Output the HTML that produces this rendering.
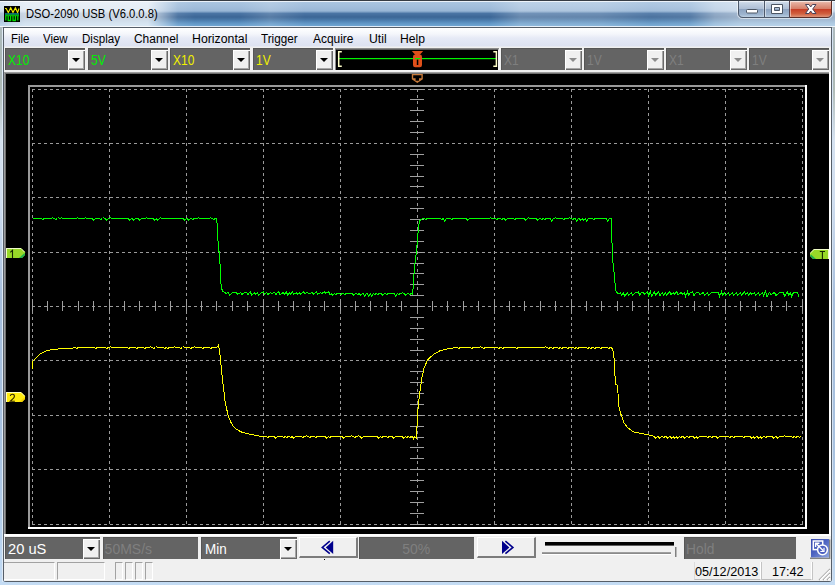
<!DOCTYPE html>
<html><head><meta charset="utf-8"><title>DSO-2090 USB</title>
<style>
html,body{margin:0;padding:0;}
body{width:835px;height:585px;overflow:hidden;position:relative;background:#bcd2ea;font-family:"Liberation Sans",sans-serif;}
.abs{position:absolute;}
#frame{left:0;top:0;width:835px;height:585px;background:linear-gradient(180deg,#b4c0c8 0px,#a9b6b4 60px,#b0bcb8 90px,#d6e2f0 140px,#d0def0 200px,#a6bedc 300px,#a8c2e0 450px,#b8d2ee 540px,#c4dcf4 585px);}
#frameL{left:2px;top:28px;width:1px;height:554px;background:#dfeaf6;}
#frameR{left:832px;top:28px;width:1px;height:554px;background:#d4e2f2;}
#cborder{left:3px;top:27px;width:829px;height:555px;background:#565e68;border-radius:0 0 3px 3px;}
#titlebar{left:0;top:1px;width:835px;height:26px;
 background:
  linear-gradient(90deg,rgba(255,255,255,.55) 0px,rgba(255,255,255,.72) 25px,rgba(255,255,255,.74) 148px,rgba(255,255,255,.4) 164px,rgba(255,255,255,.08) 178px,rgba(255,255,255,0) 195px,rgba(255,255,255,0) 240px,rgba(255,255,255,.14) 270px,rgba(255,255,255,0) 305px,rgba(255,255,255,0) 490px,rgba(255,255,255,.22) 520px,rgba(255,255,255,.2) 600px,rgba(255,255,255,.08) 650px,rgba(255,255,255,.12) 690px,rgba(255,255,255,.4) 715px,rgba(255,255,255,.5) 740px,rgba(255,255,255,.5) 835px),
  linear-gradient(180deg,#eaf1f9 0px,#eaf1f9 1px,#a9c4e0 1.500px,#a2bedc 6px,#98b6d6 10px,#4a74a4 12.500px,#3c6696 16px,#4a7aaa 19px,#5e94c4 22px,#70a6d2 25px,#e0ecf8 25px,#e0ecf8 26px);}
#toprow{left:0;top:0;width:835px;height:1px;background:#363c44;}
#title{left:26px;top:6px;font-size:12px;line-height:16px;color:#000;white-space:nowrap;transform-origin:0 0;transform:scaleX(.936);}
#client{left:4px;top:28px;width:827px;height:553px;background:#f0f0f0;}
#menubar{left:4px;top:28px;width:827px;height:19px;background:linear-gradient(180deg,#ffffff 0px,#f4f6fb 6px,#e6eaf6 10px,#dde2f1 18px,#f0f0f0 19px);}
.mi{position:absolute;top:32px;font-size:12px;line-height:14px;color:#000;white-space:nowrap;transform-origin:0 0;transform:scaleX(.95);}
.combo{position:absolute;height:21.500px;background:#646464;box-sizing:border-box;box-shadow:inset 1px 1px 0 #565656;}
.combo .t{position:absolute;left:3px;top:4px;font-size:14px;line-height:16px;white-space:nowrap;transform-origin:0 0;transform:scaleX(.855);}
.btn{position:absolute;right:0;top:2px;bottom:0;width:17px;background:#f0f0f0;box-sizing:border-box;border-top:1px solid #fff;border-left:1px solid #fff;box-shadow:inset -1px -1px 0 #6a6a6a, inset -2px -2px 0 #a6a6a6;}
.btn:after{content:"";position:absolute;left:3px;top:7px;border-left:4px solid transparent;border-right:4px solid transparent;border-top:4px solid #000;}
.dis .btn:after{border-top-color:#8c8c8c;}
.dis .t{color:#7f7f7f;}
.edit{height:22px !important;}
.edit .t{top:3.500px;}
.pbtn{position:absolute;height:21px;background:#f0f0f0;box-sizing:border-box;border-top:1px solid #fff;border-left:1px solid #fff;border-right:2px solid #7c7c7c;border-bottom:2px solid #7c7c7c;}
.sp{position:absolute;box-sizing:border-box;border-top:1px solid #a2a2a2;border-left:1px solid #a2a2a2;border-right:1px solid #fff;border-bottom:1px solid #fff;height:18px;top:562px;}
.st{position:absolute;font-size:12.500px;line-height:14px;color:#000;white-space:nowrap;top:565px;transform-origin:0 0;transform:scaleX(1.012);}
svg.scope{position:absolute;left:4px;top:72px;}
</style></head>
<body>
<div id="frame" class="abs"></div>
<div id="frameL" class="abs"></div><div id="frameR" class="abs"></div>
<div id="cborder" class="abs"></div>
<div id="toprow" class="abs"></div>
<div id="titlebar" class="abs"></div>
<svg class="abs" style="left:734px;top:0" width="101" height="22" viewBox="734 0 101 22">
<defs>
<linearGradient id="gb" x1="0" y1="0" x2="0" y2="1"><stop offset="0" stop-color="#dfe7f1"/><stop offset=".12" stop-color="#c8d5e5"/><stop offset=".47" stop-color="#aebfd5"/><stop offset=".52" stop-color="#8da3c0"/><stop offset=".85" stop-color="#9fb6d0"/><stop offset="1" stop-color="#bdd0e2"/></linearGradient>
<linearGradient id="gr" x1="0" y1="0" x2="0" y2="1"><stop offset="0" stop-color="#f0cfc4"/><stop offset=".12" stop-color="#e4ac9c"/><stop offset=".47" stop-color="#d6806a"/><stop offset=".52" stop-color="#c63e26"/><stop offset=".8" stop-color="#d0603f"/><stop offset="1" stop-color="#de957a"/></linearGradient>
<clipPath id="cpb"><path d="M739 1 H831 V13 Q831 17 827 17 H743 Q739 17 739 13 Z"/></clipPath>
</defs>
<path d="M737.500 1 V13.500 Q737.500 18.500 742.500 18.500 H827.500 Q832.500 18.500 832.500 13.500 V1" fill="none" stroke="#ffffff" stroke-opacity=".55" stroke-width="1"/>
<g clip-path="url(#cpb)">
<rect x="739" y="1" width="26" height="16" fill="url(#gb)"/>
<rect x="765" y="1" width="25" height="16" fill="url(#gb)"/>
<rect x="790" y="1" width="42" height="16" fill="url(#gr)"/>
<path d="M739.500 1.500 H764 V16.500 M765.500 16.500 V1.500 H789 M790.500 16.500 V1.500 H831" fill="none" stroke="#fff" stroke-opacity=".5" stroke-width="1"/>
</g>
<path d="M738.500 1 V13 Q738.500 17.500 743 17.500 H789.500" fill="none" stroke="#4c586a" stroke-width="1"/>
<path d="M789.500 17.500 H827 Q831.500 17.500 831.500 13 V1" fill="none" stroke="#5c2c24" stroke-width="1"/>
<path d="M764.500 1 V17.500" stroke="#4c586a" stroke-width="1" fill="none"/>
<path d="M789.500 1 V17.500" stroke="#54404a" stroke-width="1" fill="none"/>
<!-- minimize -->
<rect x="746.500" y="9.500" width="11" height="3.500" rx="1" fill="#fff" stroke="#4c5664" stroke-width="1"/>
<!-- maximize -->
<path d="M771.500 4.500 H782.500 V13.500 H771.500 Z M774.500 7.500 V10.500 H779.500 V7.500 Z" fill="#fff" fill-rule="evenodd" stroke="#4c5664" stroke-width="1" stroke-linejoin="round"/>
<!-- close X -->
<path d="M805.500 4.500 L809 4.500 L810.700 7 L812.400 4.500 L816 4.500 L812.700 9 L816 13.500 L812.400 13.500 L810.700 11 L809 13.500 L805.500 13.500 L808.700 9 Z" fill="#fff" stroke="#4a4258" stroke-width="1" stroke-linejoin="round"/>
</svg>

<svg class="abs" style="left:4px;top:6px" width="16" height="16" viewBox="0 0 16 16">
<rect width="16" height="16" fill="#000"/>
<polyline points="1,2.500 2.200,2.500 4.300,6.600 6.700,1.800 9,6.600 11.400,1.800 13.600,6.600 15,2.500" fill="none" stroke="#f0ec00" stroke-width="1.100"/>
<rect x="1" y="7.300" width="14" height="1.400" fill="#109898"/>
<rect x="1" y="8.700" width="14" height="1.500" fill="#00b800"/>
<path d="M1.800 14.500 V10 M4.200 10 V14.500 H6.600 V10 M9 10 V14.500 H11.400 V10 M13.800 10 V14.500" fill="none" stroke="#00dc00" stroke-width="1.300"/>
</svg>

<div id="title" class="abs">DSO-2090 USB (V6.0.0.8)</div>
<div id="client" class="abs"></div>
<div id="menubar" class="abs"></div>
<span class="mi" style="left:11px;transform:scaleX(0.955)">File</span>
<span class="mi" style="left:43px;transform:scaleX(0.955)">View</span>
<span class="mi" style="left:82px;transform:scaleX(0.965)">Display</span>
<span class="mi" style="left:134px;transform:scaleX(0.995)">Channel</span>
<span class="mi" style="left:192px;transform:scaleX(1.025)">Horizontal</span>
<span class="mi" style="left:261px;transform:scaleX(0.975)">Trigger</span>
<span class="mi" style="left:313px;transform:scaleX(0.995)">Acquire</span>
<span class="mi" style="left:368.5px;transform:scaleX(1.02)">Util</span>
<span class="mi" style="left:400px;transform:scaleX(1.01)">Help</span>

<!-- top toolbar -->
<div class="combo" style="left:5px;top:48px;width:80px"><span class="t" style="color:#00f000">X10</span><div class="btn"></div></div>
<div class="combo" style="left:88px;top:48px;width:80px"><span class="t" style="color:#00f000">5V</span><div class="btn"></div></div>
<div class="combo" style="left:170px;top:48px;width:80px"><span class="t" style="color:#f0f000">X10</span><div class="btn"></div></div>
<div class="combo" style="left:252.500px;top:48px;width:80.500px"><span class="t" style="color:#f0f000">1V</span><div class="btn"></div></div>
<svg class="abs" style="left:335px;top:48px" width="165" height="23" viewBox="335 48 165 23">
<rect x="335" y="48" width="165" height="23" fill="#f4f4f4"/>
<rect x="335" y="48" width="164" height="1.500" fill="#8a8a8a"/>
<rect x="335" y="48" width="1.500" height="22" fill="#8a8a8a"/>
<rect x="336" y="49.500" width="162" height="20.500" fill="#000"/>
<rect x="338" y="58" width="159" height="1.200" fill="#00f400"/>
<path d="M341.800 51.700 H338.700 V66.300 H341.800" fill="none" stroke="#ffffc8" stroke-width="1.500"/>
<path d="M493.300 51.700 H496.400 V66.300 H493.300" fill="none" stroke="#ffffc8" stroke-width="1.500"/>
<!-- trigger pos icon -->
<path d="M411.800 51 H423.200 L419.500 55 H415.500 Z" fill="#e0501a"/>
<rect x="413" y="54.500" width="9" height="12.700" rx="2.200" fill="#e0501a"/>
<rect x="415" y="58" width="5" height="1.200" fill="#00f400"/>
<rect x="416.800" y="59.600" width="1.500" height="5.400" fill="#000"/>
</svg>

<div class="combo dis" style="left:500.500px;top:48px;width:81px"><span class="t">X1</span><div class="btn"></div></div>
<div class="combo dis" style="left:583.500px;top:48px;width:80.500px"><span class="t">1V</span><div class="btn"></div></div>
<div class="combo dis" style="left:666px;top:48px;width:81px"><span class="t">X1</span><div class="btn"></div></div>
<div class="combo dis" style="left:748.500px;top:48px;width:80.500px"><span class="t">1V</span><div class="btn"></div></div>

<svg class="scope" width="827" height="464" viewBox="4 72 827 464">
<rect x="4" y="72" width="827" height="464" fill="#fff"/>
<rect x="4" y="72" width="825" height="462" fill="#9e9e9e"/>
<rect x="5" y="73" width="824" height="461" fill="#6e6e6e"/>
<rect x="6" y="74" width="823" height="460" fill="#000"/>
<g shape-rendering="crispEdges">
<rect x="28" y="85" width="779" height="2" fill="#9a9a9a"/>
<rect x="28" y="85" width="2" height="444" fill="#9a9a9a"/>
<rect x="28" y="527" width="779" height="2" fill="#fff"/>
<rect x="805" y="85" width="2" height="444" fill="#fff"/>
<g stroke="#9a9a9a" stroke-width="1" stroke-dasharray="3 3">
<line x1="32.5" y1="89" x2="32.5" y2="525" />
<line x1="109.5" y1="89" x2="109.5" y2="525" />
<line x1="186.5" y1="89" x2="186.5" y2="525" />
<line x1="263.5" y1="89" x2="263.5" y2="525" />
<line x1="340.5" y1="89" x2="340.5" y2="525" />
<line x1="417.5" y1="89" x2="417.5" y2="525" />
<line x1="494.5" y1="89" x2="494.5" y2="525" />
<line x1="571.5" y1="89" x2="571.5" y2="525" />
<line x1="648.5" y1="89" x2="648.5" y2="525" />
<line x1="725.5" y1="89" x2="725.5" y2="525" />
<line x1="802.5" y1="89" x2="802.5" y2="525" />
<line x1="32" y1="89.5" x2="803" y2="89.5" />
<line x1="32" y1="143.5" x2="803" y2="143.5" />
<line x1="32" y1="197.5" x2="803" y2="197.5" />
<line x1="32" y1="252.5" x2="803" y2="252.5" />
<line x1="32" y1="306.5" x2="803" y2="306.5" />
<line x1="32" y1="360.5" x2="803" y2="360.5" />
<line x1="32" y1="415.5" x2="803" y2="415.5" />
<line x1="32" y1="469.5" x2="803" y2="469.5" />
<line x1="32" y1="524.5" x2="803" y2="524.5" />
</g>
<g stroke="#a0a0a0" stroke-width="1">
<line x1="32.5" y1="301" x2="32.5" y2="311" />
<line x1="47.5" y1="301" x2="47.5" y2="311" />
<line x1="62.5" y1="301" x2="62.5" y2="311" />
<line x1="78.5" y1="301" x2="78.5" y2="311" />
<line x1="93.5" y1="301" x2="93.5" y2="311" />
<line x1="109.5" y1="301" x2="109.5" y2="311" />
<line x1="124.5" y1="301" x2="124.5" y2="311" />
<line x1="139.5" y1="301" x2="139.5" y2="311" />
<line x1="155.5" y1="301" x2="155.5" y2="311" />
<line x1="170.5" y1="301" x2="170.5" y2="311" />
<line x1="186.5" y1="301" x2="186.5" y2="311" />
<line x1="201.5" y1="301" x2="201.5" y2="311" />
<line x1="216.5" y1="301" x2="216.5" y2="311" />
<line x1="232.5" y1="301" x2="232.5" y2="311" />
<line x1="247.5" y1="301" x2="247.5" y2="311" />
<line x1="263.5" y1="301" x2="263.5" y2="311" />
<line x1="278.5" y1="301" x2="278.5" y2="311" />
<line x1="293.5" y1="301" x2="293.5" y2="311" />
<line x1="309.5" y1="301" x2="309.5" y2="311" />
<line x1="324.5" y1="301" x2="324.5" y2="311" />
<line x1="340.5" y1="301" x2="340.5" y2="311" />
<line x1="355.5" y1="301" x2="355.5" y2="311" />
<line x1="370.5" y1="301" x2="370.5" y2="311" />
<line x1="386.5" y1="301" x2="386.5" y2="311" />
<line x1="401.5" y1="301" x2="401.5" y2="311" />
<line x1="417.5" y1="301" x2="417.5" y2="311" />
<line x1="432.5" y1="301" x2="432.5" y2="311" />
<line x1="447.5" y1="301" x2="447.5" y2="311" />
<line x1="463.5" y1="301" x2="463.5" y2="311" />
<line x1="478.5" y1="301" x2="478.5" y2="311" />
<line x1="494.5" y1="301" x2="494.5" y2="311" />
<line x1="509.5" y1="301" x2="509.5" y2="311" />
<line x1="524.5" y1="301" x2="524.5" y2="311" />
<line x1="540.5" y1="301" x2="540.5" y2="311" />
<line x1="555.5" y1="301" x2="555.5" y2="311" />
<line x1="571.5" y1="301" x2="571.5" y2="311" />
<line x1="586.5" y1="301" x2="586.5" y2="311" />
<line x1="601.5" y1="301" x2="601.5" y2="311" />
<line x1="617.5" y1="301" x2="617.5" y2="311" />
<line x1="632.5" y1="301" x2="632.5" y2="311" />
<line x1="648.5" y1="301" x2="648.5" y2="311" />
<line x1="663.5" y1="301" x2="663.5" y2="311" />
<line x1="678.5" y1="301" x2="678.5" y2="311" />
<line x1="694.5" y1="301" x2="694.5" y2="311" />
<line x1="709.5" y1="301" x2="709.5" y2="311" />
<line x1="725.5" y1="301" x2="725.5" y2="311" />
<line x1="740.5" y1="301" x2="740.5" y2="311" />
<line x1="755.5" y1="301" x2="755.5" y2="311" />
<line x1="771.5" y1="301" x2="771.5" y2="311" />
<line x1="786.5" y1="301" x2="786.5" y2="311" />
<line x1="802.5" y1="301" x2="802.5" y2="311" />
<line x1="410" y1="89.5" x2="424" y2="89.5" />
<line x1="410" y1="99.5" x2="424" y2="99.5" />
<line x1="410" y1="110.5" x2="424" y2="110.5" />
<line x1="410" y1="121.5" x2="424" y2="121.5" />
<line x1="410" y1="132.5" x2="424" y2="132.5" />
<line x1="410" y1="143.5" x2="424" y2="143.5" />
<line x1="410" y1="154.5" x2="424" y2="154.5" />
<line x1="410" y1="165.5" x2="424" y2="165.5" />
<line x1="410" y1="176.5" x2="424" y2="176.5" />
<line x1="410" y1="186.5" x2="424" y2="186.5" />
<line x1="410" y1="197.5" x2="424" y2="197.5" />
<line x1="410" y1="208.5" x2="424" y2="208.5" />
<line x1="410" y1="219.5" x2="424" y2="219.5" />
<line x1="410" y1="230.5" x2="424" y2="230.5" />
<line x1="410" y1="241.5" x2="424" y2="241.5" />
<line x1="410" y1="252.5" x2="424" y2="252.5" />
<line x1="410" y1="263.5" x2="424" y2="263.5" />
<line x1="410" y1="273.5" x2="424" y2="273.5" />
<line x1="410" y1="284.5" x2="424" y2="284.5" />
<line x1="410" y1="295.5" x2="424" y2="295.5" />
<line x1="410" y1="306.5" x2="424" y2="306.5" />
<line x1="410" y1="317.5" x2="424" y2="317.5" />
<line x1="410" y1="328.5" x2="424" y2="328.5" />
<line x1="410" y1="339.5" x2="424" y2="339.5" />
<line x1="410" y1="350.5" x2="424" y2="350.5" />
<line x1="410" y1="360.5" x2="424" y2="360.5" />
<line x1="410" y1="371.5" x2="424" y2="371.5" />
<line x1="410" y1="382.5" x2="424" y2="382.5" />
<line x1="410" y1="393.5" x2="424" y2="393.5" />
<line x1="410" y1="404.5" x2="424" y2="404.5" />
<line x1="410" y1="415.5" x2="424" y2="415.5" />
<line x1="410" y1="426.5" x2="424" y2="426.5" />
<line x1="410" y1="437.5" x2="424" y2="437.5" />
<line x1="410" y1="447.5" x2="424" y2="447.5" />
<line x1="410" y1="458.5" x2="424" y2="458.5" />
<line x1="410" y1="469.5" x2="424" y2="469.5" />
<line x1="410" y1="480.5" x2="424" y2="480.5" />
<line x1="410" y1="491.5" x2="424" y2="491.5" />
<line x1="410" y1="502.5" x2="424" y2="502.5" />
<line x1="410" y1="513.5" x2="424" y2="513.5" />
<line x1="410" y1="524.5" x2="424" y2="524.5" />
</g>
</g>
<polyline fill="none" stroke="#00ff00" stroke-width="1" shape-rendering="crispEdges" points="32.5,218.5 35.5,218.5 35.5,218.5 37.5,218.5 37.5,218.5 39.5,218.5 39.5,218.5 41.5,218.5 41.5,218.5 42.5,219.5 44.5,218.5 44.5,218.5 49.5,218.5 49.5,218.5 51.5,218.5 51.5,218.5 52.5,217.5 53.5,218.5 54.5,218.5 55.5,219.5 57.5,218.5 57.5,218.5 58.5,217.5 59.5,218.5 60.5,218.5 61.5,217.5 62.5,218.5 63.5,218.5 66.5,218.5 66.5,218.5 69.5,218.5 69.5,218.5 72.5,218.5 72.5,218.5 76.5,218.5 76.5,218.5 77.5,217.5 78.5,218.5 79.5,218.5 82.5,218.5 82.5,218.5 84.5,218.5 84.5,218.5 85.5,217.5 86.5,218.5 87.5,218.5 92.5,218.5 92.5,218.5 93.5,220.5 95.5,218.5 96.5,218.5 99.5,218.5 99.5,218.5 100.5,219.5 102.5,218.5 102.5,218.5 103.5,217.5 104.5,218.5 105.5,218.5 106.5,220.5 108.5,218.5 109.5,218.5 110.5,217.5 111.5,218.5 112.5,218.5 117.5,218.5 117.5,218.5 121.5,218.5 121.5,218.5 126.5,218.5 126.5,218.5 128.5,218.5 128.5,218.5 129.5,220.5 131.5,218.5 132.5,218.5 133.5,220.5 135.5,218.5 136.5,218.5 138.5,218.5 138.5,218.5 139.5,220.5 141.5,218.5 141.5,218.5 145.5,218.5 145.5,218.5 146.5,217.5 147.5,218.5 148.5,218.5 153.5,218.5 153.5,218.5 154.5,220.5 156.5,218.5 156.5,218.5 157.5,220.5 159.5,218.5 159.5,218.5 160.5,217.5 161.5,218.5 162.5,218.5 166.5,218.5 166.5,218.5 169.5,218.5 169.5,218.5 174.5,218.5 174.5,218.5 179.5,218.5 179.5,218.5 183.5,218.5 183.5,218.5 184.5,220.5 186.5,218.5 187.5,218.5 188.5,220.5 190.5,218.5 191.5,218.5 192.5,219.5 194.5,218.5 194.5,218.5 197.5,218.5 197.5,218.5 198.5,217.5 199.5,218.5 200.5,218.5 203.5,218.5 203.5,218.5 205.5,218.5 205.5,218.5 209.5,218.5 209.5,218.5 210.5,217.5 211.5,218.5 212.5,218.5 213.5,219.5 215.5,218.5 216.4,218.5 217.5,226.0 218.0,241.0 219.8,259.6 221.0,284.0 221.3,288.0 223.0,291.5 226.0,293.3 228.5,292.5 229.5,295.5 232.5,292.5 236.5,292.5 236.5,292.5 237.5,294.5 240.5,292.5 242.0,294.5 244.5,292.5 246.5,292.5 246.5,292.5 248.0,294.5 250.5,291.5 251.5,295.5 254.5,292.5 255.5,294.5 257.5,292.5 258.5,295.5 261.5,292.5 263.5,292.5 263.5,291.5 264.5,294.5 266.5,292.5 268.0,294.5 270.5,292.5 272.0,293.5 274.5,292.5 276.0,294.5 278.5,291.5 280.0,294.5 283.5,292.5 284.5,294.5 286.5,291.5 287.5,295.5 289.5,292.5 290.5,294.5 292.5,291.5 293.5,294.5 296.5,292.5 297.5,294.5 299.5,292.5 300.5,294.5 303.5,291.5 304.5,293.5 307.5,292.5 309.0,293.5 312.5,292.5 313.5,294.5 316.5,291.5 317.5,294.5 320.5,292.5 322.0,293.5 324.5,291.5 325.5,293.5 328.5,291.5 330.0,294.5 331.5,293.5 332.5,295.5 334.5,293.5 334.5,293.5 335.5,294.5 337.5,293.5 337.5,293.5 339.5,293.5 339.5,293.5 340.5,294.5 342.5,293.5 343.5,293.5 344.5,294.5 346.5,293.5 346.5,293.5 349.5,293.5 349.5,293.5 352.5,293.5 352.5,293.5 353.5,295.5 355.5,293.5 356.5,293.5 357.5,294.5 359.5,293.5 359.5,293.5 360.5,295.5 362.5,293.5 363.5,293.5 364.5,296.5 366.5,293.5 367.5,293.5 368.5,296.5 370.5,293.5 370.5,293.5 371.5,296.5 373.5,293.5 373.5,293.5 374.5,294.5 376.5,293.5 376.5,293.5 377.5,294.5 379.5,293.5 379.5,293.5 381.5,293.5 381.5,293.5 382.5,295.5 384.5,293.5 385.5,293.5 386.5,294.5 388.5,293.5 388.5,293.5 392.5,293.5 392.5,293.5 394.5,293.5 394.5,293.5 395.5,296.5 397.5,293.5 397.5,293.5 398.5,294.5 400.5,293.5 401.5,293.5 402.5,292.5 403.5,293.5 404.5,293.5 405.5,295.5 407.5,293.5 408.5,293.5 409.5,294.5 411.5,293.5 412.8,294.4 413.2,284.0 414.9,263.6 416.3,253.3 417.5,239.0 418.6,225.6 420.0,220.5 422.0,219.0 424.5,218.5 425.5,219.5 427.5,218.5 428.5,218.5 430.5,218.5 430.5,218.5 434.5,218.5 434.5,218.5 437.5,218.5 437.5,218.5 440.5,218.5 440.5,218.5 441.5,219.5 443.5,218.5 443.5,218.5 444.5,221.5 446.5,218.5 447.5,218.5 450.5,218.5 450.5,218.5 451.5,219.5 453.5,218.5 453.5,218.5 458.5,218.5 458.5,218.5 461.5,218.5 461.5,218.5 466.5,218.5 466.5,218.5 467.5,220.5 469.5,218.5 470.5,218.5 474.5,218.5 474.5,218.5 478.5,218.5 478.5,218.5 483.5,218.5 483.5,218.5 485.5,218.5 485.5,218.5 489.5,218.5 489.5,218.5 490.5,217.5 491.5,218.5 492.5,218.5 495.5,218.5 495.5,218.5 496.5,219.5 498.5,218.5 498.5,218.5 500.5,218.5 500.5,218.5 501.5,219.5 503.5,218.5 504.5,218.5 505.5,220.5 507.5,218.5 508.5,218.5 513.5,218.5 513.5,218.5 514.5,219.5 516.5,218.5 517.5,218.5 520.5,218.5 520.5,218.5 522.5,218.5 522.5,218.5 524.5,218.5 524.5,218.5 525.5,220.5 527.5,218.5 527.5,218.5 528.5,217.5 529.5,218.5 530.5,218.5 532.5,218.5 532.5,218.5 536.5,218.5 536.5,218.5 537.5,220.5 539.5,218.5 540.5,218.5 541.5,219.5 543.5,218.5 543.5,218.5 544.5,219.5 546.5,218.5 547.5,218.5 550.5,218.5 550.5,218.5 551.5,221.5 553.5,218.5 554.5,218.5 555.5,217.5 556.5,218.5 557.5,218.5 560.5,218.5 560.5,218.5 562.5,218.5 562.5,218.5 563.5,219.5 565.5,218.5 565.5,218.5 568.5,218.5 568.5,218.5 569.5,217.5 570.5,218.5 571.5,218.5 572.5,219.5 574.5,218.5 575.5,218.5 576.5,221.5 578.5,218.5 579.5,218.5 580.5,220.5 582.5,218.5 582.5,218.5 583.5,220.5 585.5,218.5 585.5,218.5 586.5,221.5 588.5,218.5 588.5,218.5 592.5,218.5 592.5,218.5 593.5,219.5 595.5,218.5 595.5,218.5 599.5,218.5 599.5,218.5 601.5,218.5 601.5,218.5 606.5,218.5 606.5,218.5 607.5,221.5 609.5,218.5 611.6,218.5 611.9,241.0 613.1,264.6 614.7,278.0 615.5,290.3 618.2,294.0 620.5,292.5 621.5,295.5 623.5,292.5 624.5,296.5 627.5,292.5 628.5,295.5 631.5,292.5 632.5,295.5 635.5,292.5 638.5,292.5 638.5,291.5 639.5,295.5 641.5,292.5 643.5,292.5 643.5,292.5 644.5,294.5 647.5,291.5 648.5,295.5 650.5,291.5 651.5,296.5 654.5,291.5 655.5,295.5 658.5,291.5 660.0,295.5 662.5,292.5 663.5,295.5 665.5,292.5 666.5,295.5 669.5,291.5 671.0,294.5 673.5,292.5 674.5,294.5 676.5,291.5 678.0,294.5 681.5,292.5 682.5,294.5 684.5,292.5 685.5,296.5 687.5,291.5 688.5,295.5 690.5,292.5 692.5,292.5 692.5,291.5 694.0,295.5 696.5,292.5 698.5,292.5 698.5,292.5 700.0,294.5 703.5,292.5 704.5,295.5 707.5,292.5 708.5,295.5 711.5,292.5 714.5,292.5 714.5,292.5 718.5,292.5 718.5,292.5 719.5,296.5 721.5,291.5 722.5,295.5 724.5,292.5 725.5,295.5 728.5,292.5 729.5,295.5 732.5,292.5 733.5,295.5 736.5,292.5 737.5,295.5 740.5,292.5 741.5,295.5 744.5,291.5 745.5,294.5 747.5,292.5 748.5,295.5 750.5,292.5 751.5,294.5 754.5,292.5 755.5,295.5 758.5,292.5 759.5,295.5 762.5,292.5 763.5,295.5 765.5,291.5 767.0,296.5 769.5,292.5 771.0,294.5 774.5,292.5 776.0,295.5 779.5,292.5 783.5,292.5 783.5,292.5 784.5,296.5 787.5,291.5 788.5,295.5 790.5,292.5 791.5,296.5 793.5,292.5 797.5,292.5 797.5,292.5 799.0,296.5"/>
<polyline fill="none" stroke="#ffff00" stroke-width="1" shape-rendering="crispEdges" points="32.7,369.0 33.0,361.0 36.4,357.7 40.5,353.6 46.7,350.5 52.0,349.6 59.0,348.9 66.0,348.3 73.0,348.0 75.5,347.5 76.5,348.5 78.5,347.5 79.5,347.5 82.5,347.5 82.5,347.5 85.5,347.5 85.5,347.5 87.5,347.5 87.5,347.5 91.5,347.5 91.5,347.5 94.5,347.5 94.5,347.5 95.5,348.5 97.5,347.5 98.5,347.5 101.5,347.5 101.5,347.5 105.5,347.5 105.5,347.5 106.5,348.5 108.5,347.5 109.5,347.5 110.5,346.5 111.5,347.5 112.5,347.5 115.5,347.5 115.5,347.5 118.5,347.5 118.5,347.5 123.5,347.5 123.5,347.5 127.5,347.5 127.5,347.5 128.5,348.5 130.5,347.5 130.5,347.5 135.5,347.5 135.5,347.5 136.5,348.5 138.5,347.5 138.5,347.5 143.5,347.5 143.5,347.5 144.5,348.5 146.5,347.5 146.5,347.5 149.5,347.5 149.5,347.5 150.5,346.5 151.5,347.5 152.5,347.5 153.5,348.5 155.5,347.5 155.5,347.5 156.5,346.5 157.5,347.5 158.5,347.5 161.5,347.5 161.5,347.5 163.5,347.5 163.5,347.5 164.5,348.5 166.5,347.5 166.5,347.5 167.5,348.5 169.5,347.5 169.5,347.5 173.5,347.5 173.5,347.5 174.5,346.5 175.5,347.5 176.5,347.5 179.5,347.5 179.5,347.5 180.5,348.5 182.5,347.5 182.5,347.5 183.5,346.5 184.5,347.5 185.5,347.5 189.5,347.5 189.5,347.5 190.5,348.5 192.5,347.5 193.5,347.5 194.5,346.5 195.5,347.5 196.5,347.5 201.5,347.5 201.5,347.5 202.5,348.5 204.5,347.5 204.5,347.5 209.5,347.5 209.5,347.5 210.5,348.5 212.5,347.5 212.5,347.5 216.5,347.5 218.6,345.0 220.0,354.6 222.0,375.0 225.1,401.8 228.2,416.0 230.5,421.5 233.3,426.4 237.0,429.6 241.5,432.0 246.0,433.3 251.8,434.6 258.0,435.8 264.0,436.7 266.5,436.5 267.5,437.5 269.5,436.5 270.5,436.5 274.5,436.5 274.5,436.5 275.5,438.5 277.5,436.5 278.5,436.5 282.5,436.5 282.5,436.5 283.5,437.5 285.5,436.5 285.5,436.5 286.5,437.5 288.5,436.5 289.5,436.5 290.5,437.5 292.5,436.5 292.5,436.5 293.5,438.5 295.5,436.5 296.5,436.5 301.5,436.5 301.5,436.5 302.5,437.5 304.5,436.5 305.5,436.5 306.5,435.5 307.5,436.5 308.5,436.5 309.5,437.5 311.5,436.5 312.5,436.5 314.5,436.5 314.5,436.5 315.5,437.5 317.5,436.5 318.5,436.5 320.5,436.5 320.5,436.5 325.5,436.5 325.5,436.5 326.5,438.5 328.5,436.5 328.5,436.5 329.5,437.5 331.5,436.5 332.5,436.5 337.5,436.5 337.5,436.5 342.5,436.5 342.5,436.5 343.5,438.5 345.5,436.5 346.5,436.5 348.5,436.5 348.5,436.5 350.5,436.5 350.5,436.5 351.5,435.5 352.5,436.5 353.5,436.5 354.5,437.5 356.5,436.5 357.5,436.5 358.5,435.5 359.5,436.5 360.5,436.5 361.5,438.5 363.5,436.5 363.5,436.5 368.5,436.5 368.5,436.5 373.5,436.5 373.5,436.5 377.5,436.5 377.5,436.5 378.5,438.5 380.5,436.5 380.5,436.5 381.5,437.5 383.5,436.5 384.5,436.5 386.5,436.5 386.5,436.5 387.5,437.5 389.5,436.5 390.5,436.5 392.5,436.5 392.5,436.5 393.5,438.5 395.5,436.5 396.5,436.5 398.5,436.5 398.5,436.5 402.5,436.5 402.5,436.5 403.5,438.5 405.5,436.5 405.5,436.5 406.5,437.5 408.5,436.5 408.5,436.5 409.5,437.5 411.5,436.5 412.5,436.5 413.5,438.5 414.5,436.5 416.5,438.7 417.3,418.2 418.4,403.8 420.0,391.5 421.6,379.2 424.1,368.0 427.6,359.7 433.3,354.6 440.5,350.5 447.7,348.9 454.9,347.6 457.5,347.5 458.5,348.5 460.5,347.5 461.5,347.5 466.5,347.5 466.5,347.5 470.5,347.5 470.5,347.5 471.5,348.5 473.5,347.5 473.5,347.5 477.5,347.5 477.5,347.5 479.5,347.5 479.5,347.5 480.5,346.5 481.5,347.5 482.5,347.5 483.5,348.5 485.5,347.5 486.5,347.5 488.5,347.5 488.5,347.5 492.5,347.5 492.5,347.5 497.5,347.5 497.5,347.5 498.5,348.5 500.5,347.5 501.5,347.5 502.5,348.5 504.5,347.5 504.5,347.5 509.5,347.5 509.5,347.5 512.5,347.5 512.5,347.5 515.5,347.5 515.5,347.5 516.5,348.5 518.5,347.5 519.5,347.5 523.5,347.5 523.5,347.5 527.5,347.5 527.5,347.5 530.5,347.5 530.5,347.5 533.5,347.5 533.5,347.5 536.5,347.5 536.5,347.5 541.5,347.5 541.5,347.5 544.5,347.5 544.5,347.5 545.5,346.5 546.5,347.5 547.5,347.5 548.5,348.5 550.5,347.5 551.5,347.5 552.5,348.5 554.5,347.5 554.5,347.5 557.5,347.5 557.5,347.5 558.5,348.5 560.5,347.5 560.5,347.5 561.5,348.5 563.5,347.5 563.5,347.5 566.5,347.5 566.5,347.5 567.5,348.5 569.5,347.5 569.5,347.5 573.5,347.5 573.5,347.5 574.5,348.5 576.5,347.5 576.5,347.5 577.5,348.5 579.5,347.5 579.5,347.5 583.5,347.5 583.5,347.5 586.5,347.5 586.5,347.5 587.5,348.5 589.5,347.5 589.5,347.5 590.5,348.5 592.5,347.5 593.5,347.5 594.5,348.5 596.5,347.5 597.5,347.5 599.5,347.5 599.5,347.5 600.5,348.5 602.5,347.5 602.5,347.5 607.5,347.5 607.5,347.5 608.5,348.5 610.5,347.5 611.6,347.4 613.7,352.6 615.5,384.4 617.5,385.4 618.8,405.9 620.9,414.1 623.7,422.3 627.4,427.4 633.6,432.0 641.8,433.6 652.0,435.6 654.5,436.5 655.5,438.5 657.5,436.5 658.5,436.5 659.5,438.5 661.5,436.5 662.5,436.5 663.5,437.5 665.5,436.5 666.5,436.5 667.5,438.5 669.5,436.5 670.5,436.5 671.5,438.5 673.5,436.5 673.5,436.5 674.5,438.5 676.5,436.5 676.5,436.5 677.5,438.5 679.5,436.5 679.5,436.5 680.5,437.5 682.5,436.5 683.5,436.5 684.5,438.5 686.5,436.5 687.5,436.5 688.5,437.5 690.5,436.5 690.5,436.5 693.5,436.5 693.5,436.5 694.5,438.5 696.5,436.5 696.5,436.5 697.5,438.5 699.5,436.5 699.5,436.5 703.5,436.5 703.5,436.5 706.5,436.5 706.5,436.5 707.5,437.5 709.5,436.5 710.5,436.5 711.5,437.5 713.5,436.5 714.5,436.5 716.5,436.5 716.5,436.5 717.5,438.5 719.5,436.5 720.5,436.5 725.5,436.5 725.5,436.5 728.5,436.5 728.5,436.5 729.5,437.5 731.5,436.5 732.5,436.5 733.5,437.5 735.5,436.5 736.5,436.5 739.5,436.5 739.5,436.5 742.5,436.5 742.5,436.5 743.5,437.5 745.5,436.5 745.5,436.5 748.5,436.5 748.5,436.5 750.5,436.5 750.5,436.5 751.5,438.5 753.5,436.5 753.5,436.5 754.5,438.5 756.5,436.5 757.5,436.5 758.5,438.5 760.5,436.5 760.5,436.5 761.5,438.5 763.5,436.5 764.5,436.5 765.5,437.5 767.5,436.5 767.5,436.5 772.5,436.5 772.5,436.5 773.5,438.5 775.5,436.5 776.5,436.5 777.5,438.5 779.5,436.5 780.5,436.5 783.5,436.5 783.5,436.5 784.5,435.5 785.5,436.5 786.5,436.5 791.5,436.5 791.5,436.5 792.5,437.5 794.5,436.5 794.5,436.5 795.5,437.5 797.5,436.5 798.5,436.5 799.5,437.5 800.5,436.5"/>
<!-- ch1 marker -->
<path d="M6 248 H21 L25 252 V255 L22 258 H6 Z" fill="#98d828"/>
<path d="M6 248.500 H21 L24.700 252.200" fill="none" stroke="#f0fcc8" stroke-width="1"/>
<path d="M6.500 248 V258" fill="none" stroke="#f0fcc8" stroke-width="1"/>
<path d="M25 255 L22 258 H19 L24.500 253 Z" fill="#22b04c"/>
<path d="M10.300 252.300 L12.500 250.300 V258" fill="none" stroke="#142800" stroke-width="1.100"/>
<!-- ch2 marker -->
<path d="M6 392 H21 L25 396 V399 L22 402 H6 Z" fill="#ffec10"/>
<path d="M6 392.500 H21 L24.700 396.200" fill="none" stroke="#ffffc0" stroke-width="1"/>
<path d="M6.500 392 V402" fill="none" stroke="#ffffc0" stroke-width="1"/>
<path d="M25 399 L22 402 H19 L24.500 397.500 Z" fill="#f4d000"/>
<path d="M10.300 396 Q10.600 394.300 12.400 394.300 Q14.400 394.300 14.400 396.200 Q14.400 397.600 12.500 399.200 L10.300 401.300 H14.900" fill="none" stroke="#302400" stroke-width="1.100"/>
<!-- T marker right -->
<path d="M829 249 H814 L810 253 V256 L813 259 H829 Z" fill="#98d828"/>
<path d="M829 249.500 H814 L810.300 253.200" fill="none" stroke="#f0fcc8" stroke-width="1"/>
<path d="M828.500 249 V259" fill="none" stroke="#f0fcc8" stroke-width="1"/>
<path d="M810 256 L813 259 H816 L811 254.500 Z" fill="#22b04c"/>
<path d="M819.800 251.500 H825 M822.400 251.500 V259" fill="none" stroke="#142800" stroke-width="1.100"/>
<!-- trigger time marker top -->
<path d="M411.800 74 H422.800 V79.200 L417.300 83 L411.800 79.200 Z" fill="#c87a3a"/>
<path d="M413.200 75.300 H421.400 V78.200 H419 V80.700 H415.600 V78.200 H413.200 Z" fill="#000"/>

</svg>

<!-- bottom toolbar -->
<div class="combo" style="left:5px;top:537px;width:95.300px"><span class="t" style="color:#fff;transform:scaleX(1.05)">20 uS</span><div class="btn"></div></div>
<div class="combo dis edit" style="left:102.600px;top:537px;width:95.400px"><span class="t" style="left:2px;transform:scaleX(1.0)">50MS/s</span></div>
<div class="combo" style="left:201.400px;top:537px;width:95.600px"><span class="t" style="color:#fff;left:4px;transform:scaleX(.96)">Min</span><div class="btn"></div></div>
<div class="pbtn" style="left:299px;top:537px;width:59px"></div>
<div class="combo dis edit" style="left:358.700px;top:537px;width:115.100px"><span class="t" style="left:43.500px;transform:scaleX(1.0)">50%</span></div>
<div class="pbtn" style="left:477px;top:537px;width:59px"></div>
<svg class="abs" style="left:299px;top:537px" width="540" height="24" viewBox="299 537 540 24">
<!-- << -->
<path d="M329.800 541.200 L322.300 547.450 L329.800 553.700" fill="none" stroke="#00008c" stroke-width="1.600"/>
<path d="M333.200 540.800 V554.100 L325.800 547.450 Z" fill="#00008c"/>
<rect x="324" y="559" width="1" height="1" fill="#000"/>
<!-- >> -->
<path d="M502 540.800 V554.100 L509.400 547.450 Z" fill="#00008c"/>
<path d="M505.400 541.200 L512.900 547.450 L505.400 553.700" fill="none" stroke="#00008c" stroke-width="1.600"/>
<!-- slider -->
<rect x="545" y="542" width="129" height="3.600" fill="#000"/>
<rect x="542" y="552.200" width="129" height="1.800" fill="#8a8a8a"/>
<rect x="542" y="554" width="129" height="1" fill="#fff"/>
<rect x="675" y="547" width="1.500" height="10" fill="#808080"/>
<!-- right icon -->
<defs><linearGradient id="gi" x1="0" y1="0" x2="1" y2="1"><stop offset="0" stop-color="#3848b0"/><stop offset=".45" stop-color="#4c62c0"/><stop offset="1" stop-color="#8ea4de"/></linearGradient></defs>
<path d="M810 557.400 H829 V539.500 H830.400 V559 H810 Z" fill="#848484"/>
<rect x="811" y="539" width="18" height="18.400" fill="url(#gi)"/>
<rect x="813.300" y="541" width="9.400" height="8.600" fill="none" stroke="#fff" stroke-width="1.500"/>
<circle cx="822.500" cy="549.800" r="4.900" fill="#4a5ec0" stroke="#fff" stroke-width="1.500"/>
<path d="M816.300 543.800 L823.300 550.800" fill="none" stroke="#fff" stroke-width="1.400"/>
<path d="M815.600 547 V543.200 H819.400" fill="none" stroke="#fff" stroke-width="1.400"/>
<path d="M824 547.800 V551.500 H820.300" fill="none" stroke="#fff" stroke-width="1.200"/>
</svg>

<div class="combo dis edit" style="left:683.600px;top:537px;width:112.500px"><span class="t" style="left:2.300px;transform:scaleX(.985)">Hold</span></div>

<!-- status bar -->
<div class="sp" style="left:4px;width:51px;border-left:none"></div>
<div class="sp" style="left:57px;width:48px"></div>
<div class="sp" style="left:115px;width:8px"></div>
<div class="sp" style="left:125px;width:8px"></div>
<div class="sp" style="left:135px;width:8px"></div>
<div class="sp" style="left:145px;width:8px"></div>
<div class="sp" style="left:694px;width:67px;border-top:none;border-left:1px solid #dcdcdc;border-right:1px solid #fff;border-bottom:1px solid #bcbcbc;box-shadow:1px 0 0 #c4c4c4"></div>
<div class="sp" style="left:762px;width:50px;border-top:none;border-left:none;border-right:1px solid #fff;border-bottom:1px solid #bcbcbc;box-shadow:1px 0 0 #c4c4c4"></div>
<svg class="abs" style="left:817px;top:567px" width="14" height="14" viewBox="0 0 14 14"><g stroke-width="1.200" fill="none"><path d="M2 13 L13 2 M6 13 L13 6 M10 13 L13 10" stroke="#a8a8a8"/><path d="M3.200 13 L13 3.200 M7.200 13 L13 7.200 M11.200 13 L13 11.200" stroke="#fff"/></g></svg>
<span class="st" style="left:695.400px">05/12/2013</span>
<span class="st" style="left:772.200px">17:42</span>
</body></html>
